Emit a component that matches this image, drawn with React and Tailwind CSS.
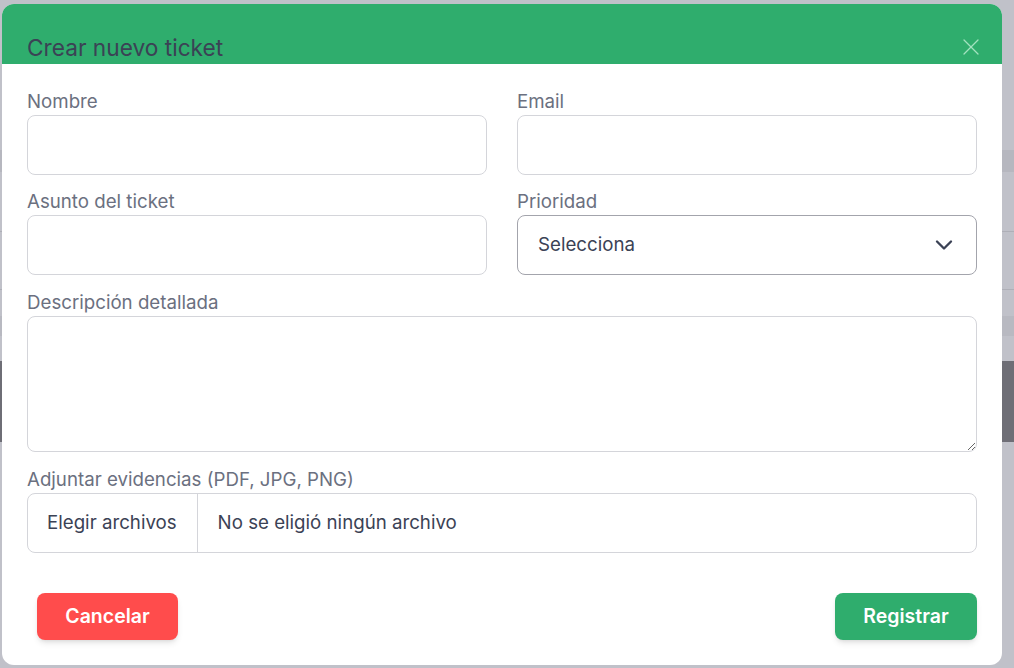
import React from 'react';
import { X, ChevronDown } from 'lucide-react';

function Field({ label, children }) {
  return (
    <div className="flex flex-col">
      <label className="text-[18.7px] leading-[26px] text-[#6b7080]">{label}</label>
      {children}
    </div>
  );
}

export default function App() {
  return (
    <div className="relative w-[1014px] h-[668px] overflow-hidden bg-[#c0c1c9]" style={{ fontFamily: 'Inter, "Noto Sans", sans-serif' }}>
      {/* page behind the overlay */}
      <div className="flex flex-col h-full">
        <div className="h-[150px]" />
        <div className="h-[22px] bg-[#b6b7bf]" />
        <div className="h-[60px] border-b border-[#aeafb7]" />
        <div className="h-[58px] border-b border-[#aeafb7]" />
        <div className="h-[26px]" />
        <div className="h-[20px] bg-[#b8b9c1]" />
        <div className="h-[25px]" />
        <div className="h-[81px] bg-[#6e6e76]" />
        <div className="flex-1" />
      </div>

      {/* modal */}
      <div className="absolute left-[2px] top-[4px] w-[1000px] h-[661px] bg-white rounded-[12px] overflow-hidden flex flex-col">
        <div className="h-[60px] bg-[#2fad6d] flex items-end justify-between px-[25px] pb-[2px]">
          <h2 className="text-[22.7px] leading-7 text-[#3b4255]">Crear nuevo ticket</h2>
          <X size={28} strokeWidth={1.1} className="text-[#a3e2c0] mb-[1px] -mr-[8px]" />
        </div>

        <div className="flex-1 flex flex-col px-[25px] pt-[25px] pb-[25px]">
          <div className="grid grid-cols-2 gap-x-[30px] gap-y-[14px]">
            <Field label="Nombre">
              <input className="h-[60px] rounded-[8px] border border-[#d4d5da] outline-none px-5" />
            </Field>
            <Field label="Email">
              <input className="h-[60px] rounded-[8px] border border-[#d4d5da] outline-none px-5" />
            </Field>
            <Field label="Asunto del ticket">
              <input className="h-[60px] rounded-[8px] border border-[#d4d5da] outline-none px-5" />
            </Field>
            <Field label="Prioridad">
              <div className="h-[60px] rounded-[8px] border border-[#a3a4ac] flex items-center justify-between pl-5 pr-[18px]">
                <span className="text-[18.7px] text-[#3b4255]">Selecciona</span>
                <ChevronDown size={28} strokeWidth={2} className="text-[#3b4255]" />
              </div>
            </Field>
          </div>

          <div className="mt-[15px]">
            <Field label="Descripción detallada">
              <textarea className="h-[136px] rounded-[8px] border border-[#d4d5da] outline-none px-5 py-3 resize-y" />
            </Field>
          </div>

          <div className="mt-[15px]">
            <Field label="Adjuntar evidencias (PDF, JPG, PNG)">
              <div className="h-[60px] rounded-[8px] border border-[#d4d5da] flex items-center text-[18.7px] text-[#3b4255]">
                <div className="h-full flex items-center pl-[19px] pr-5 border-r border-[#d4d5da]">Elegir archivos</div>
                <div className="pl-5">No se eligió ningún archivo</div>
              </div>
            </Field>
          </div>

          <div className="mt-auto flex justify-between">
            <button className="ml-[10px] w-[141px] h-[47px] rounded-[8px] bg-[#ff4c4c] text-white font-semibold text-[19.5px] shadow-md">
              Cancelar
            </button>
            <button className="w-[142px] h-[47px] rounded-[8px] bg-[#2fad6d] text-white font-semibold text-[19.5px] shadow-md">
              Registrar
            </button>
          </div>
        </div>
      </div>
    </div>
  );
}
